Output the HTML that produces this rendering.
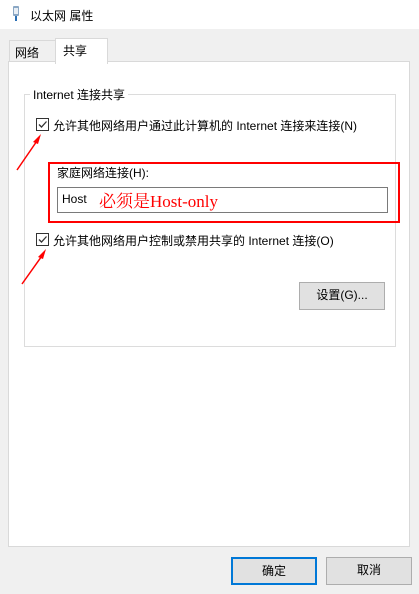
<html><head><style>
body{margin:0;width:419px;height:594px;background:#f0f0f0;font-family:"Liberation Sans","Noto Sans CJK SC",sans-serif;font-size:12px;color:#000;position:relative;overflow:hidden}
.a{position:absolute}
.cb{position:absolute;width:11px;height:11px;border:1px solid #333;background:#fff}
.btn{position:absolute;background:#e1e1e1;border:1px solid #adadad;box-sizing:border-box;text-align:center;line-height:25px}
</style></head><body>
<div class="a" style="left:0;top:0;width:419px;height:29px;background:#fff"></div>
<svg class="a" style="left:11px;top:6px" width="10" height="16"><rect x="2" y="0" width="6" height="10" rx="1" fill="#8aa7c4"/><rect x="3" y="2" width="4" height="6" fill="#e8eef5"/><rect x="4" y="10" width="2" height="5" fill="#2a6fb5"/></svg>
<div class="a" style="left:30px;top:7px">以太网 属性</div>
<div class="a" style="left:9px;top:40px;width:45px;height:21px;border:1px solid #d9d9d9;border-bottom:none;background:#f0f0f0"></div>
<div class="a" style="left:15px;top:44px">网络</div>
<div class="a" style="left:8px;top:61px;width:400px;height:484px;border:1px solid #d9d9d9;background:#fff"></div>
<div class="a" style="left:55px;top:38px;width:51px;height:25px;border:1px solid #d9d9d9;border-bottom:none;background:#fff"></div>
<div class="a" style="left:63px;top:42px">共享</div>
<div class="a" style="left:24px;top:94px;width:370px;height:251px;border:1px solid #dcdcdc"></div>
<div class="a" style="left:30px;top:86px;background:#fff;padding:0 3px">Internet 连接共享</div>
<div class="cb" style="left:36px;top:118px"></div>
<svg class="a" style="left:37px;top:119px" width="11" height="11"><path d="M2 5.5L4.5 8L9.5 2.5" stroke="#333" stroke-width="1.3" fill="none"/></svg>
<div class="a" style="left:53px;top:117px">允许其他网络用户通过此计算机的 Internet 连接来连接(N)</div>
<div class="a" style="left:48px;top:162px;width:348px;height:57px;border:2px solid #f00"></div>
<div class="a" style="left:57px;top:164px">家庭网络连接(H):</div>
<div class="a" style="left:57px;top:187px;width:329px;height:24px;border:1px solid #7a7a7a;background:#fff"></div>
<div class="a" style="left:62px;top:192px">Host</div>
<div class="a" style="left:99px;top:187px;color:#f00;font-size:17px;font-family:'Liberation Serif','Noto Serif CJK SC',serif">必须是Host-only</div>
<div class="cb" style="left:36px;top:233px"></div>
<svg class="a" style="left:37px;top:234px" width="11" height="11"><path d="M2 5.5L4.5 8L9.5 2.5" stroke="#333" stroke-width="1.3" fill="none"/></svg>
<div class="a" style="left:53px;top:232px">允许其他网络用户控制或禁用共享的 Internet 连接(O)</div>
<div class="btn" style="left:299px;top:282px;width:86px;height:28px">设置(G)...</div>
<svg class="a" style="left:0;top:120px" width="60" height="180"><path d="M17 50L39 18" stroke="#f00" stroke-width="1.5"/><path d="M41 14L33 22L38 24Z" fill="#f00"/><path d="M22 164L44 133" stroke="#f00" stroke-width="1.5"/><path d="M46 129L38 137L43 139Z" fill="#f00"/></svg>
<div class="btn" style="left:231px;top:557px;width:86px;height:28px;border:2px solid #0078d7;line-height:24px">确定</div>
<div class="btn" style="left:326px;top:557px;width:86px;height:28px">取消</div>
</body></html>
